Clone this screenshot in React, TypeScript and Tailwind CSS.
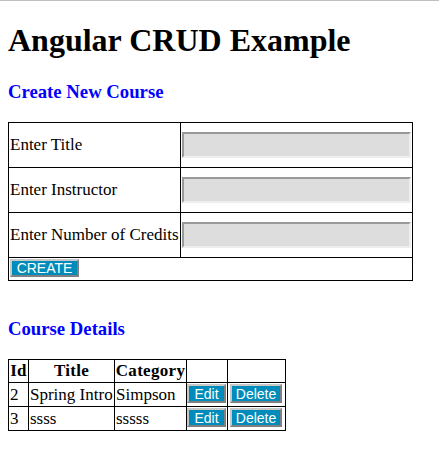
import React from 'react';

const courses = [
  { id: 2, title: 'Spring Intro', category: 'Simpson' },
  { id: 3, title: 'ssss', category: 'sssss' },
];

const btn =
  "block bg-[#008CBA] text-white text-center font-['Liberation_Sans',Arial,sans-serif] text-[14px] leading-none border-2 border-t-[#c8c8c8] border-l-[#c8c8c8] border-b-[#808080] border-r-[#808080]";

const fields = ['Enter Title', 'Enter Instructor', 'Enter Number of Credits'];

const App = () => {
  return (
    <div className="min-h-[466px] bg-white text-black font-['Liberation_Serif','Times_New_Roman',serif] text-[16px] leading-[normal]">
      <div className="h-px bg-[#c0c0c0]" />
      <div className="px-2">
        <h1 className="mt-[21.44px] text-[32px] font-bold leading-[normal]">Angular CRUD Example</h1>

        {/* Create form */}
        <h3 className="mt-[21.44px] mb-[19px] text-[18.72px] font-bold leading-[normal] text-[#0000ff]">
          Create New Course
        </h3>
        <table className="w-[405px] table-fixed border-collapse border border-black text-[17px]">
          <colgroup>
            <col className="w-[172px]" />
            <col />
          </colgroup>
          <tbody>
            {fields.map((f) => (
              <tr key={f}>
                <td className="border border-black p-px whitespace-nowrap align-middle">{f}</td>
                <td className="border border-black p-px">
                  <input
                    type="text"
                    className="block w-full h-[26px] my-2 bg-[#dddddd] border-2 border-t-[#999] border-l-[#999] border-b-[#eee] border-r-[#eee] outline-none"
                  />
                </td>
              </tr>
            ))}
            <tr>
              <td colSpan={2} className="border border-black px-px pt-px pb-[3px]">
                <button className={`${btn} w-[69px] h-[18px]`}>CREATE</button>
              </td>
            </tr>
          </tbody>
        </table>

        {/* Course list */}
        <h3 className="mt-[37px] mb-[19.5px] text-[18.72px] font-bold leading-[normal] text-[#0000ff]">
          Course Details
        </h3>
        <table className="w-[278px] table-fixed border-collapse border border-black text-[17px]">
          <colgroup>
            <col className="w-[20px]" />
            <col className="w-[86px]" />
            <col className="w-[72px]" />
            <col className="w-[41px]" />
            <col />
          </colgroup>
          <thead>
            <tr className="h-[23px]">
              <th className="border border-black p-0 font-bold text-center tracking-[0.3px]">Id</th>
              <th className="border border-black p-0 font-bold text-center tracking-[0.3px]">Title</th>
              <th className="border border-black p-0 font-bold text-center tracking-[0.3px] whitespace-nowrap">Category</th>
              <th className="border border-black p-px"></th>
              <th className="border border-black p-px"></th>
            </tr>
          </thead>
          <tbody>
            {courses.map((c) => (
              <tr key={c.id} className="h-[24px]">
                <td className="border border-black p-px text-left">{c.id}</td>
                <td className="border border-black p-px text-left whitespace-nowrap">{c.title}</td>
                <td className="border border-black p-px text-left">{c.category}</td>
                <td className="border border-black px-0 pt-px pb-[3px]">
                  <button className={`${btn} w-[39px] h-[19px]`}>Edit</button>
                </td>
                <td className="border border-black pl-[2px] pr-px pt-px pb-[3px]">
                  <button className={`${btn} w-[52px] h-[19px]`}>Delete</button>
                </td>
              </tr>
            ))}
          </tbody>
        </table>
      </div>
    </div>
  );
};

export default App;
